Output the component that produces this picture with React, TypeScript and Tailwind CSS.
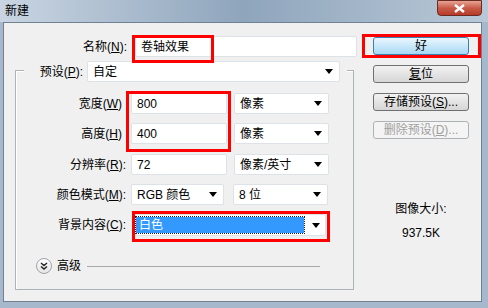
const font = { fontFamily: '"Liberation Sans", "Noto Sans CJK SC", sans-serif' }

function Arrow() {
  return (
    <svg width="8" height="5" viewBox="0 0 8 5" className="shrink-0">
      <path d="M0 0H8L4 5Z" fill="#000" />
    </svg>
  )
}

function Field({ w, value }: { w: string; value: string }) {
  return (
    <div className={`${w} h-[21px] bg-white border border-[#dde2e7] rounded-[2px] flex items-center px-[5px] text-[12px] leading-none text-black`}>
      {value}
    </div>
  )
}

function Select({ w, value }: { w: string; value: string }) {
  return (
    <div className={`${w} h-[21px] bg-white border border-[#dde2e7] rounded-[2px] flex items-center justify-between pl-[5px] pr-[6px] text-[12px] leading-none text-black`}>
      <span>{value}</span>
      <Arrow />
    </div>
  )
}

function Label({ children, pr }: { children: React.ReactNode; pr?: string }) {
  return (
    <div className={`w-[111px] text-right text-[12px] leading-none text-black ${pr ?? 'pr-[1px]'}`}>{children}</div>
  )
}

function Btn({ children, primary, disabled }: { children: React.ReactNode; primary?: boolean; disabled?: boolean }) {
  const cls = primary
    ? 'border-[#3c7fb1] bg-gradient-to-b from-[#eaf6fd] to-[#a7d9f5] text-black'
    : disabled
      ? 'border-[#adb2b5] bg-[#f4f4f4] text-[#a0a0a0]'
      : 'border-[#707070] bg-gradient-to-b from-[#f2f2f2] to-[#d6d6d6] text-black'
  return (
    <div className={`w-[96px] h-[18px] border rounded-[3px] flex items-center justify-center text-[12px] leading-none ${cls}`}>
      {children}
    </div>
  )
}

export default function App() {
  return (
    <div className="w-[488px] h-[308px] bg-[#a6b8cb] flex flex-col overflow-hidden relative" style={font}>
      {/* title bar */}
      <div className="h-[22px] shrink-0 bg-gradient-to-r from-[#c9d5e2] via-[#8fa5bc] to-[#b9c8d7] flex items-center pl-[5px] relative">
        <span className="text-[12px] leading-none text-black">新建</span>
        <div className="absolute right-[6px] top-0 w-[45px] h-[16px] rounded-b-[4px] border border-[#6b2a22] bg-gradient-to-b from-[#e6a394] via-[#c85a48] to-[#b83a26] flex items-center justify-center">
          <svg width="11" height="9" viewBox="0 0 11 9">
            <path d="M1 1L10 8M10 1L1 8" stroke="#fff" strokeWidth="2.4" />
          </svg>
        </div>
      </div>

      {/* client area */}
      <div className="ml-[3px] mr-[6px] mb-[6px] flex-1 bg-[#f0f0f0] border border-[#6f8193] flex">
        {/* left column */}
        <div className="w-[353px] shrink-0 flex flex-col">
          <div className="flex items-center mt-[13px]">
            <div className="w-[123px] text-right text-[12px] leading-none">
              名称(<u>N</u>):
            </div>
            <div className="ml-[8px]">
              <Field w="w-[222px]" value="卷轴效果" />
            </div>
          </div>

          {/* group box */}
          <div className="ml-[11px] mt-[13px] w-[339px] h-[220px] border border-[#aeb3b8] shadow-[inset_1px_1px_0_#fff] flex flex-col">
            <div className="ml-[8px] -mt-[10px] w-[323px] bg-[#f0f0f0] flex items-center">
              <div className="w-[59px] text-right text-[12px] leading-none">
                预设(<u>P</u>):
              </div>
              <div className="ml-[4px]">
                <Select w="w-[253px]" value="自定" />
              </div>
            </div>

            <div className="flex items-center mt-[11px]">
              <Label pr="pr-[5px]">宽度(<u>W</u>)</Label>
              <div className="ml-[4px] flex gap-[7px]">
                <Field w="w-[96px]" value="800" />
                <Select w="w-[95px]" value="像素" />
              </div>
            </div>
            <div className="flex items-center mt-[9px]">
              <Label pr="pr-[5px]">高度(<u>H</u>)</Label>
              <div className="ml-[4px] flex gap-[7px]">
                <Field w="w-[96px]" value="400" />
                <Select w="w-[95px]" value="像素" />
              </div>
            </div>
            <div className="flex items-center mt-[10px]">
              <Label>分辨率(<u>R</u>):</Label>
              <div className="ml-[4px] flex gap-[7px]">
                <Field w="w-[96px]" value="72" />
                <Select w="w-[95px]" value="像素/英寸" />
              </div>
            </div>
            <div className="flex items-center mt-[9px]">
              <Label>颜色模式(<u>M</u>):</Label>
              <div className="ml-[4px] flex gap-[9px]">
                <Select w="w-[93px]" value="RGB 颜色" />
                <Select w="w-[95px]" value="8 位" />
              </div>
            </div>
            <div className="flex items-center mt-[9px]">
              <Label>背景内容(<u>C</u>):</Label>
              <div className="ml-[7px] w-[192px] h-[22px] bg-white border border-[#dde2e7] rounded-[2px] flex items-center pl-[1px] pr-[5px]">
                <div className="flex-1 h-[16px] bg-[#3399ff] outline-1 outline-dotted outline-[#222] text-white text-[12px] leading-none flex items-center pl-[3px]">
                  白色
                </div>
                <div className="ml-[8px]">
                  <Arrow />
                </div>
              </div>
            </div>

            <div className="flex items-center mt-[22px] ml-[20px]">
              <div className="w-[16px] h-[16px] rounded-full border border-[#9ea4aa] bg-gradient-to-b from-white to-[#e4e4e4] flex items-center justify-center">
                <svg width="8" height="8" viewBox="0 0 8 8">
                  <path d="M1 1L4 3.5L7 1M1 4.5L4 7L7 4.5" stroke="#222" strokeWidth="1.4" fill="none" />
                </svg>
              </div>
              <span className="ml-[5px] text-[12px] leading-none">高级</span>
              <div className="ml-[6px] w-[233px] h-px bg-[#a9a9a9]" />
            </div>
          </div>
        </div>

        {/* right column */}
        <div className="ml-[16px] flex flex-col">
          <div className="mt-[14px] flex flex-col gap-[10px]">
            <Btn primary>好</Btn>
            <Btn>
              <span>
                <u>复</u>位
              </span>
            </Btn>
            <Btn>
              存储预设(<u>S</u>)...
            </Btn>
            <Btn disabled>
              删除预设(<u>D</u>)...
            </Btn>
          </div>
          <div className="mt-[64px] w-[96px] text-center text-[12px] leading-none">图像大小:</div>
          <div className="mt-[12px] w-[96px] text-center text-[12px] leading-none">937.5K</div>
        </div>
      </div>

      {/* red annotation boxes */}
      <div className="absolute left-[132px] top-[35px] w-[82px] h-[28px] border-[3px] border-[#ff0000]" />
      <div className="absolute left-[362px] top-[34px] w-[119px] h-[24px] border-[3px] border-[#ff0000]" />
      <div className="absolute left-[126px] top-[91px] w-[105px] h-[61px] border-[3px] border-[#ff0000]" />
      <div className="absolute left-[132px] top-[211px] w-[198px] h-[31px] border-[3px] border-[#ff0000]" />
    </div>
  )
}
